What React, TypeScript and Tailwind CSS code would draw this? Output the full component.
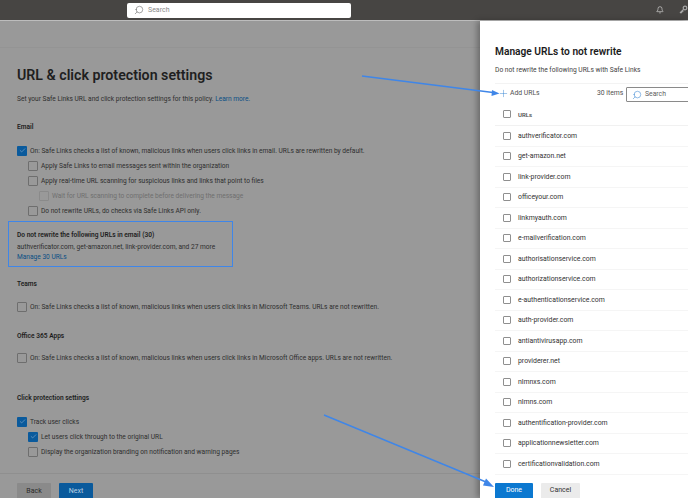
import { Bell, Check, Plus, Search } from 'lucide-react';

const urls = [
  'authverificator.com',
  'get-amazon.net',
  'link-provider.com',
  'officeyour.com',
  'linkmyauth.com',
  'e-mailverification.com',
  'authorisationservice.com',
  'authorizationservice.com',
  'e-authenticationservice.com',
  'auth-provider.com',
  'antiantivirusapp.com',
  'providerer.net',
  'nlmnxs.com',
  'nlmns.com',
  'authentification-provider.com',
  'applicationnewsletter.com',
  'certificationvalidation.com',
];

function Box({ checked = false, faded = false }: { checked?: boolean; faded?: boolean }) {
  if (checked) {
    return (
      <span className="flex h-[10px] w-[10px] shrink-0 items-center justify-center rounded-[1px] bg-[#0a5a9c]">
        <Check size={7} strokeWidth={1.5} className="text-[#b9cfe2]" />
      </span>
    );
  }
  return (
    <span
      className={`h-[10px] w-[10px] shrink-0 rounded-[1px] border ${faded ? 'border-[#8a8a8a]' : 'border-[#6e6e6e]'}`}
    />
  );
}

function Row({
  text,
  checked,
  faded,
  indent = 'pl-0',
  height = 'h-[15px]',
}: {
  text: string;
  checked?: boolean;
  faded?: boolean;
  indent?: string;
  height?: string;
}) {
  return (
    <div className={`flex items-center gap-[2px] ${height} ${indent}`}>
      <Box checked={checked} faded={faded} />
      <span className={`ml-[1px] whitespace-nowrap ${faded ? 'text-[#6f6f6f]' : 'text-[#2e2e2e]'}`}>{text}</span>
    </div>
  );
}

function SectionTitle({ text, className = '' }: { text: string; className?: string }) {
  return <div className={`font-semibold leading-[10px] text-[#1d1d1d] ${className}`}>{text}</div>;
}

function SettingsPage() {
  return (
    <main className="min-w-0 flex-1 bg-[#999999] text-[6.6px] leading-[10px]">
      <div className="h-[27px] border-b border-[#949494]" />
      <div className="pl-[17px] pt-[17px]">
        <h1 className="whitespace-nowrap text-[14.2px] font-semibold leading-[20px] text-[#1f1f1f]">
          URL &amp; click protection settings
        </h1>
        <p className="mt-[9px] whitespace-nowrap text-[#2e2e2e]">
          Set your Safe Links URL and click protection settings for this policy.{' '}
          <span className="text-[#0a4f85]">Learn more.</span>
        </p>

        <SectionTitle text="Email" className="mt-[18px]" />
        <div className="mt-[11px]">
          <Row checked text="On: Safe Links checks a list of known, malicious links when users click links in email. URLs are rewritten by default." />
          <Row indent="pl-[11px]" text="Apply Safe Links to email messages sent within the organization" />
          <Row indent="pl-[11px]" text="Apply real-time URL scanning for suspicious links and links that point to files" />
          <Row indent="pl-[22px]" faded text="Wait for URL scanning to complete before delivering the message" />
          <Row indent="pl-[11px]" text="Do not rewrite URLs, do checks via Safe Links API only." />
        </div>

        <div className="ml-[-9px] mt-[3px] h-[46px] w-[225px] border-[1.5px] border-[#3f86e8] pl-[8px] pt-[8px]">
          <div className="font-semibold text-[#1d1d1d]">Do not rewrite the following URLs in email (30)</div>
          <div className="mt-[2px] whitespace-nowrap text-[#2e2e2e]">
            authverificator.com, get-amazon.net, link-provider.com, and 27 more
          </div>
          <div className="text-[#0a4f85]">Manage 30 URLs</div>
        </div>

        <SectionTitle text="Teams" className="mt-[12px]" />
        <div className="mt-[10px]">
          <Row text="On: Safe Links checks a list of known, malicious links when users click links in Microsoft Teams. URLs are not rewritten." />
        </div>

        <SectionTitle text="Office 365 Apps" className="mt-[17px]" />
        <div className="mt-[9px]">
          <Row text="On: Safe Links checks a list of known, malicious links when users click links in Microsoft Office apps. URLs are not rewritten." />
        </div>

        <SectionTitle text="Click protection settings" className="mt-[28px]" />
        <div className="mt-[11px]">
          <Row checked text="Track user clicks" />
          <Row checked indent="pl-[11px]" text="Let users click through to the original URL" />
          <Row indent="pl-[11px]" text="Display the organization branding on notification and warning pages" />
        </div>
      </div>

      <div className="mt-[14px] flex gap-[8px] border-t border-[#8f8f8f] pl-[17px] pt-[9px]">
        <button className="h-[16px] w-[34px] rounded-[1px] bg-[#8a8a8a] text-[7px] text-[#2b2b2b]">Back</button>
        <button className="h-[16px] w-[34px] rounded-[1px] bg-[#0a5a9c] text-[7px] text-[#b9cfe2]">Next</button>
      </div>
    </main>
  );
}

function UrlPanel() {
  return (
    <aside className="z-10 w-[208px] shrink-0 overflow-hidden bg-white pl-[15px] text-[6.8px] shadow-[-3px_0_6px_rgba(0,0,0,0.3)]">
      <h2 className="mt-[24px] whitespace-nowrap text-[10.2px] font-semibold leading-[14px] text-[#1b1b1b]">
        Manage URLs to not rewrite
      </h2>
      <p className="mt-[6px] whitespace-nowrap text-[6.7px] leading-[10px] text-[#444444]">
        Do not rewrite the following URLs with Safe Links
      </p>

      <div className="mt-[8px] flex h-[20px] items-center border-t border-[#f3f3f3] text-[#505050]">
        <div className="flex w-[102px] shrink-0 items-center whitespace-nowrap">
          <Plus size={11} strokeWidth={1} className="ml-[3px] text-[#2f7fd0]" />
          <span className="ml-[1px]">Add URLs</span>
        </div>
        <span className="w-[29px] shrink-0 whitespace-nowrap">30 items</span>
        <div className="mt-[2px] flex h-[15px] w-[70px] shrink-0 items-center rounded-[1px] border border-[#8a8a8a] pl-[5px]">
          <Search size={10} strokeWidth={1.25} className="-scale-x-100 text-[#2f7fd0]" />
          <span className="ml-[3px] text-[#606060]">Search</span>
        </div>
      </div>

      <div className="flex h-[23px] items-center gap-[7px] border-b border-[#f1f1f1] pl-[8px] text-[6px] font-semibold text-[#505050]">
        <span className="h-[8px] w-[8px] rounded-[1px] border border-[#8f8f8f]" />
        URLs
      </div>
      {urls.map((url) => (
        <div
          key={url}
          className="flex h-[20.5px] items-center gap-[7px] border-b border-[#f5f5f5] pl-[8px] text-[6.9px] text-[#333333]"
        >
          <span className="h-[8px] w-[8px] shrink-0 rounded-[1px] border border-[#8f8f8f]" />
          <span className="whitespace-nowrap">{url}</span>
        </div>
      ))}

      <div className="mt-[8px] flex gap-[8px]">
        <button className="h-[16px] w-[38px] rounded-[1px] bg-[#0b78d0] text-[7px] text-white">Done</button>
        <button className="h-[16px] w-[39px] rounded-[1px] bg-[#ebebeb] text-[7px] text-[#333333]">Cancel</button>
      </div>
    </aside>
  );
}

export default function App() {
  return (
    <div className="relative flex h-[498px] w-[688px] flex-col overflow-hidden font-['Roboto',sans-serif]">
      <header className="flex h-[21px] shrink-0 items-center border-b border-[#bdbdbd] bg-[#474543]">
        <div className="ml-[127px] flex h-[15px] w-[224px] items-center rounded-[2px] bg-white pl-[7px] text-[7px] text-[#8a8a8a]">
          <Search size={10} strokeWidth={1.25} className="-scale-x-100 text-[#555555]" />
          <span className="ml-[4px]">Search</span>
        </div>
        <Bell size={8} strokeWidth={1.5} className="ml-[305px] text-white" />
        <svg width="10" height="10" viewBox="0 0 10 10" className="ml-[14px] text-[#a8a8a8]" fill="none" stroke="currentColor" strokeWidth="1.2">
          <circle cx="7" cy="3" r="1.8" />
          <path d="M5.5 4.5 2 8M3 7l1 1M4.2 5.8l1 1" />
        </svg>
      </header>

      <div className="flex min-h-0 flex-1">
        <SettingsPage />
        <UrlPanel />
      </div>

      {/* callout arrows over the screenshot */}
      <svg width="688" height="498" viewBox="0 0 688 498" className="pointer-events-none absolute left-0 top-0 z-20" fill="none">
        <path d="M362 76 493 92.500" stroke="#3f86e8" strokeWidth="1.4" />
        <path d="M499.500 93.500 492 90 491.500 96Z" fill="#3f86e8" />
        <path d="M324 415 486 482" stroke="#3f86e8" strokeWidth="1.4" />
        <path d="M494 487 483 485.500 486 478.500Z" fill="#3f86e8" />
      </svg>
    </div>
  );
}
